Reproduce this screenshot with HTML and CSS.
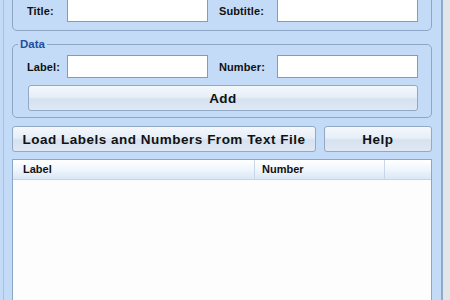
FILE: index.html
```html
<!DOCTYPE html>
<html lang="en">
<head>
    <meta charset="UTF-8">
    <title>Labels and Numbers</title>
    <link rel="stylesheet" href="styles.css">
</head>
<body>
    <div class="window">
        <div class="client">
            <div class="group top">
                <div class="row">
                    <label class="lbl">Title:</label>
                    <input class="box" type="text">
                    <label class="lbl second">Subtitle:</label>
                    <input class="box" type="text">
                </div>
            </div>

            <fieldset class="group data">
                <legend>Data</legend>
                <div class="row">
                    <label class="lbl">Label:</label>
                    <input class="box" type="text">
                    <label class="lbl second">Number:</label>
                    <input class="box" type="text">
                </div>
                <button class="btn add">Add</button>
            </fieldset>

            <div class="actions">
                <button class="btn load">Load Labels and Numbers From Text File</button>
                <button class="btn help">Help</button>
            </div>

            <div class="list">
                <div class="list-head">
                    <div class="col col-label">Label</div>
                    <div class="col col-number">Number</div>
                    <div class="col col-rest"></div>
                </div>
                <div class="list-body"></div>
            </div>
        </div>
    </div>
</body>
</html>
```

FILE: styles.css
```css
* {
    margin: 0;
    padding: 0;
    box-sizing: border-box;
}

body {
    height: 300px;
    overflow: hidden;
    background: linear-gradient(to right, #b4b8be, #e4e5e8);
    font-family: "Liberation Sans", Arial, sans-serif;
    font-weight: 700;
    color: #111;
}

/* window frame, right edge shows the desktop behind */
.window {
    width: 443px;
    height: 300px;
    padding-left: 3px;
    background: #c3dbf7;
    border-right: 2px solid #8ea9c9;
    overflow: hidden;
}

.client {
    display: flow-root;
    height: 100%;
    border-left: 1px solid #a6c0df;
    padding: 0 9px 0 8px;
}

.group {
    border: 1px solid #8ea6c5;
    border-radius: 5px;
}

.group.top {
    margin-top: -10px;
    padding: 8px 13px 8px 14px;
}

.row {
    display: flex;
    align-items: center;
}

.lbl {
    width: 40px;
    font-size: 11px;
    letter-spacing: 0.1px;
}

.lbl.second {
    width: 58px;
    margin-left: 11px;
}

.box {
    width: 141px;
    height: 23px;
    border: 1px solid #7f9db9;
    background: #fff;
}

fieldset.data {
    margin-top: 6px;
    padding: 4px 13px 6px 14px;
}

fieldset.data legend {
    margin-left: -9px;
    padding: 0 2px;
    font-size: 11.5px;
    color: #1f4f9f;
    line-height: 14px;
}

.btn {
    font-family: inherit;
    font-weight: 700;
    font-size: 13.5px;
    letter-spacing: 0.5px;
    color: #111;
    border: 1px solid #91a9c6;
    border-radius: 3px;
    background: linear-gradient(#f4f8fc 0%, #e6eef7 45%, #d6e2f0 55%, #dfe8f3 100%);
}

.add {
    display: block;
    width: 390px;
    height: 26px;
    margin: 7px 0 0 1px;
}

.actions {
    display: flex;
    gap: 8px;
    margin-top: 8px;
}

.load {
    width: 304px;
    height: 26px;
}

.help {
    width: 108px;
    height: 26px;
}

.list {
    margin-top: 7px;
    height: 200px;
    border: 1px solid #8ca7c6;
    background: #fdfdfd;
}

.list-head {
    display: flex;
    height: 20px;
    background: linear-gradient(#ffffff, #f0f6fc 50%, #d9e7f6);
    border-bottom: 1px solid #c5d4e6;
    font-size: 11px;
    line-height: 19px;
}

.col {
    border-right: 1px solid #c9d6e6;
}

.col-label {
    width: 242px;
    padding-left: 10px;
}

.col-number {
    width: 130px;
    padding-left: 7px;
}

.col-rest {
    flex: 1;
    border-right: none;
}

.list-body {
    height: 180px;
}
```
